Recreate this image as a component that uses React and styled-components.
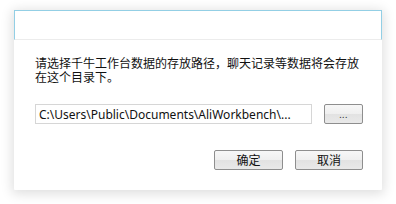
import React from "react";
import styled, { createGlobalStyle } from "styled-components";

const Global = createGlobalStyle`
  html, body { margin: 0; padding: 0; background: #ffffff; }
  body { font-family: "Noto Sans", "Noto Sans CJK SC", sans-serif; }
`;

const Page = styled.div`
  width: 396px;
  height: 204px;
  padding: 10px 14px 14px 14px;
  box-sizing: border-box;
`;

const Dialog = styled.div`
  width: 368px;
  height: 180px;
  background: #ffffff;
  display: flex;
  flex-direction: column;
  box-shadow: 0 2px 12px 2px rgba(0, 0, 0, 0.13);
  border-radius: 1px;
`;

const TitleBar = styled.div`
  height: 28px;
  border: 1px solid #93cfe5;
  border-bottom: 1px solid #ececec;
  background: #ffffff;
  flex: none;
`;

const Body = styled.div`
  flex: 1;
  display: flex;
  flex-direction: column;
  padding: 18px 19px 0 21px;
`;

const Message = styled.p`
  margin: 0;
  font-family: "Liberation Sans", "Noto Sans CJK SC", sans-serif;
  font-size: 12px;
  line-height: 13.5px;
  color: #111111;
`;

const PathRow = styled.div`
  display: flex;
  align-items: center;
  margin-top: 19px;
  gap: 12px;
`;

const PathField = styled.div`
  width: 278px;
  height: 20px;
  box-sizing: border-box;
  border: 1px solid #d6d6d6;
  padding: 0 3px;
  display: flex;
  align-items: center;
  font-family: "Noto Sans", sans-serif;
  font-size: 12px;
  color: #111;
  white-space: nowrap;
  overflow: hidden;
`;

const Button = styled.button`
  width: ${(p) => p.$w}px;
  height: 20px;
  box-sizing: border-box;
  border: 1px solid #8e8e8e;
  border-radius: 2px;
  background: linear-gradient(#f7f7f7 0%, #efefef 50%, #e2e2e2 51%, #e9e9e9 100%);
  font-family: "Noto Sans CJK SC", sans-serif;
  font-size: 12px;
  color: #111;
  padding: 0;
  display: flex;
  align-items: center;
  justify-content: center;
  line-height: 1;
`;

const Dots = styled.span`
  font-family: "Noto Sans", sans-serif;
  font-size: 9px;
  letter-spacing: 0.5px;
  color: #222;
`;

const Footer = styled.div`
  display: flex;
  justify-content: flex-end;
  gap: 12px;
  margin-top: 26px;
`;

export default function App() {
  return (
    <>
      <Global />
      <Page>
        <Dialog>
          <TitleBar />
          <Body>
            <Message>
              请选择千牛工作台数据的存放路径，聊天记录等数据将会存放
              <br />
              在这个目录下。
            </Message>
            <PathRow>
              <PathField>C:\Users\Public\Documents\AliWorkbench\...</PathField>
              <Button $w={39}>
                <Dots>...</Dots>
              </Button>
            </PathRow>
            <Footer>
              <Button $w={69}>确定</Button>
              <Button $w={68}>取消</Button>
            </Footer>
          </Body>
        </Dialog>
      </Page>
    </>
  );
}
